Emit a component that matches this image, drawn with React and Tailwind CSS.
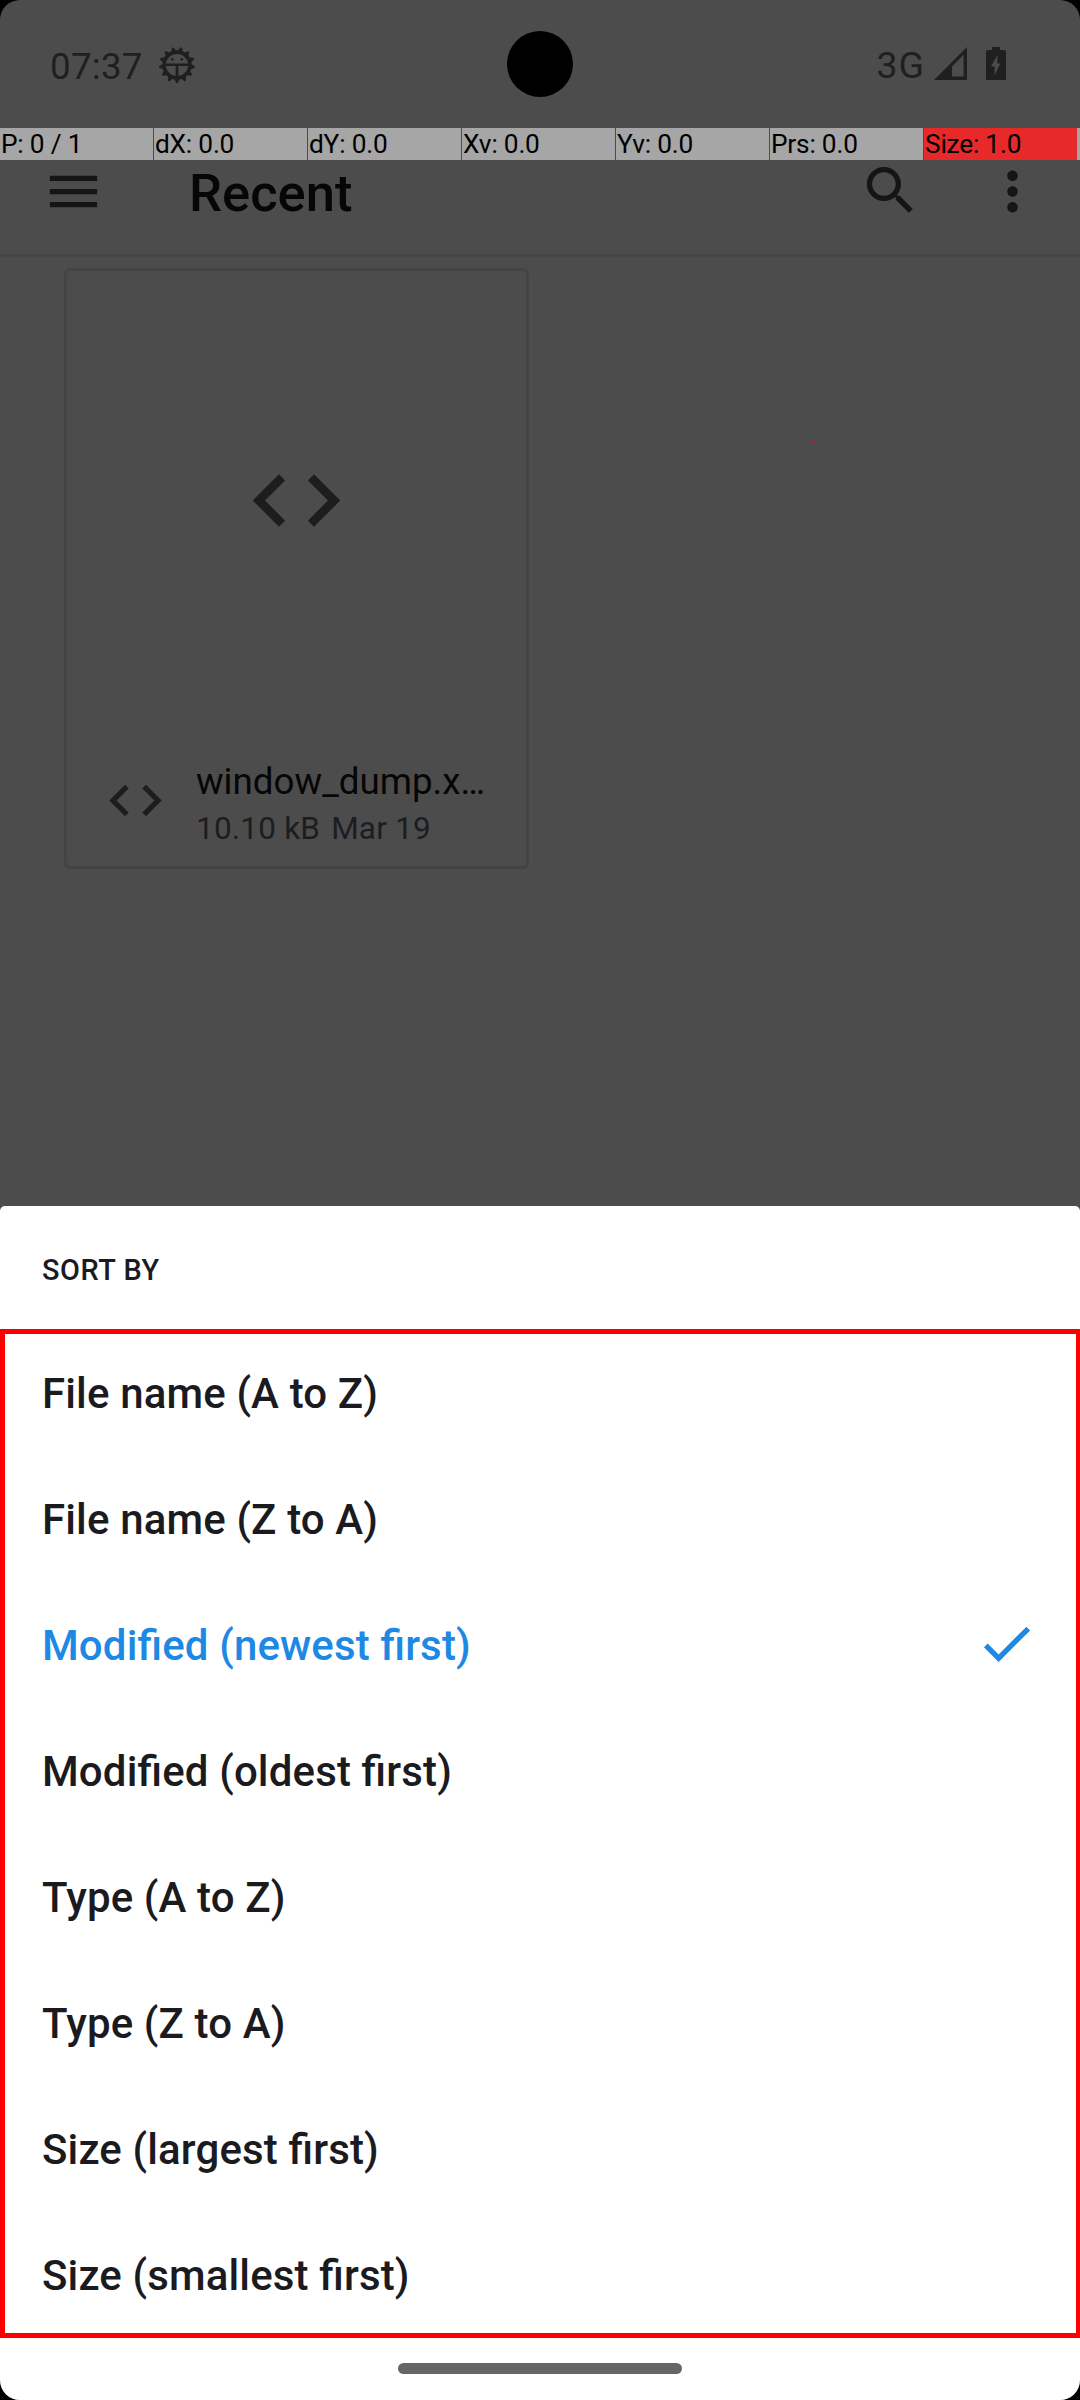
import React from 'react';

const pointerCells = [
  { label: 'P: 0 / 1', tone: 'border-[#4c4c4c] bg-[#a6a6a6]' },
  { label: 'dX: 0.0', tone: 'border-[#4c4c4c] bg-[#a6a6a6]' },
  { label: 'dY: 0.0', tone: 'border-[#4c4c4c] bg-[#a6a6a6]' },
  { label: 'Xv: 0.0', tone: 'border-[#4c4c4c] bg-[#a6a6a6]' },
  { label: 'Yv: 0.0', tone: 'border-[#c41c1d] bg-[#a6a6a6]' },
  { label: 'Prs: 0.0', tone: 'border-[#4c4c4c] bg-[#a6a6a6]' },
  { label: 'Size: 1.0', tone: 'border-[#a6a6a6] bg-[#e8292a]' },
];

const sortOptions = [
  'File name (A to Z)',
  'File name (Z to A)',
  'Modified (newest first)',
  'Modified (oldest first)',
  'Type (A to Z)',
  'Type (Z to A)',
  'Size (largest first)',
  'Size (smallest first)',
];
const selectedOption = 'Modified (newest first)';

const gearTeeth = Array.from({ length: 13 }, (_, i) => 180 + (i * 360) / 13);

const MENU = 'M3 18h18v-2H3v2zm0-5h18v-2H3v2zm0-7v2h18V6H3z';
const SEARCH =
  'M15.5 14h-.79l-.28-.27C15.41 12.59 16 11.11 16 9.5 16 5.91 13.09 3 9.5 3S3 5.91 3 9.5 5.91 16 9.5 16c1.61 0 3.09-.59 4.23-1.57l.27.28v.79l5 4.99L20.49 19l-4.99-5zm-6 0C7.01 14 5 11.99 5 9.5S7.01 5 9.5 5 14 7.01 14 9.5 11.99 14 9.5 14z';
const MORE =
  'M12 8c1.1 0 2-.9 2-2s-.9-2-2-2-2 .9-2 2 .9 2 2 2zm0 2c-1.1 0-2 .9-2 2s.9 2 2 2 2-.9 2-2-.9-2-2-2zm0 6c-1.1 0-2 .9-2 2s.9 2 2 2 2-.9 2-2-.9-2-2-2z';
const CODE =
  'M9.4 16.6L4.8 12l4.6-4.6L8 6l-6 6 6 6 1.4-1.4zm5.2 0l4.6-4.6-4.6-4.6L16 6l6 6-6 6-1.4-1.4z';
const CHECK = 'M9 16.17L4.83 12l-1.42 1.41L9 19 21 7l-1.41-1.41z';

function Icon({ d, className }) {
  return (
    <svg viewBox="0 0 24 24" fill="currentColor" className={className}>
      <path d={d} />
    </svg>
  );
}

function DebugGear() {
  return (
    <svg viewBox="-19 -19 38 38" className="ml-[15px] mt-[2px] size-[38px]">
      <g stroke="#1f1f1f" fill="none">
        <circle r="12.9" strokeWidth="3.6" />
        {gearTeeth.map((a) => (
          <path
            key={a}
            d="M-1.6 -13.5 L0 -17 L1.6 -13.5 Z"
            strokeWidth="2.2"
            strokeLinejoin="round"
            fill="#1f1f1f"
            transform={`rotate(${a})`}
          />
        ))}
        <path d="M-12 -0.2H12" strokeWidth="2.4" />
        <path d="M0 0V13" strokeWidth="2.8" />
      </g>
      <circle cx="-4.8" cy="-5.8" r="1.3" fill="#1f1f1f" />
      <circle cx="4.8" cy="-5.8" r="1.3" fill="#1f1f1f" />
    </svg>
  );
}

function StatusBar() {
  return (
    <div className="flex h-[128px] items-start pl-[50px] pr-[74px] pt-[44px] text-[#1f1f1f]">
      <span className="mt-px text-[36.75px] leading-[44px] tracking-[0.25px]">07:37</span>
      <DebugGear />
      <span className="-mt-px ml-auto text-[37.5px] font-[450] leading-[44px] tracking-[1px]">3G</span>
      <svg viewBox="0 0 33 33" className="ml-[9px] mt-[3px] size-[33px]">
        <path fillRule="evenodd" fill="#1f1f1f" d="M0 33L33 0V33ZM18 19.6V29.6H29.6V7.8Z" />
      </svg>
      <svg viewBox="0 0 20 33" className="ml-[19px] mt-[3px] h-[33px] w-[20px]">
        <path fill="#1f1f1f" d="M6 0H14V3H18.5L20 4.500V33H0V4.500L1.500 3H6Z" />
        <path fill="#4c4c4c" d="M11.500 8L5 19.500H8.800L8.500 28.500L14.300 16.500H11.300Z" />
      </svg>
    </div>
  );
}

function AppBar() {
  return (
    <div className="flex h-[129px] items-start border-b-[3px] border-[#464646] pl-[42px] pr-[36px] text-[#141516]">
      <Icon d={MENU} className="mt-[32px] size-[63px]" />
      <h1 className="ml-[84px] mt-[2px] text-[52.5px] font-medium leading-[126px] text-[#060606]">Recent</h1>
      <Icon d={SEARCH} className="ml-auto mt-[31px] size-[63px]" />
      <Icon d={MORE} className="ml-[59px] mt-[32px] size-[63px]" />
    </div>
  );
}

function FileCard() {
  return (
    <div className="ml-[64px] mt-[11px] flex h-[601px] w-[465px] flex-col rounded-[6px] border-[3px] border-[#444444] text-[#1c1d1f]">
      <div className="flex h-[462px] items-center justify-center">
        <Icon d={CODE} className="-mt-[4px] size-[105px]" />
      </div>
      <div className="flex flex-1 items-start pl-[37px]">
        <Icon d={CODE} className="mt-[36px] size-[63px]" />
        <div className="ml-[29px] mt-[27px] whitespace-nowrap">
          <div className="text-[36.75px] leading-[44px] text-[#060606]">window_dump.x…</div>
          <div className="mt-[3px] flex text-[31.5px] leading-[44px] tracking-[0.2px]">
            <span>10.10 kB</span>
            <span className="ml-[11px]">Mar 19</span>
          </div>
        </div>
      </div>
    </div>
  );
}

function PointerOverlay() {
  return (
    <div className="absolute left-0 top-[128px] flex h-[32px] w-[1080px] text-[26.25px] leading-[32px] tracking-[-0.2px] text-black">
      {pointerCells.map(({ label, tone }) => (
        <div key={label} className={`w-[154px] border-r pl-px ${tone}`}>
          {label}
        </div>
      ))}
      <div className="flex-1 bg-[#a6a6a6]" />
    </div>
  );
}

function SortSheet() {
  return (
    <div className="relative mt-auto h-[1194px] rounded-t-[5px] bg-white text-[#1b1b1f]">
      <div className="h-[125px] pl-[42px] pt-[2px] text-[28.875px] font-medium leading-[124px] tracking-[0.55px]">SORT BY</div>
      <ul className="tracking-[0.14px] [font-feature-settings:'liga'_1]">
        {sortOptions.map((option) => (
          <li
            key={option}
            className={`flex h-[126px] items-center justify-between pl-[42px] pr-[42px] text-[42px] font-medium leading-[126px] ${option === selectedOption ? 'text-[#1e88e5]' : ''}`}
          >
            {option}
            {option === selectedOption && <Icon d={CHECK} className="-mt-[6px] size-[63px]" />}
          </li>
        ))}
      </ul>
      <div className="mx-auto mt-[24px] h-[11px] w-[284px] rounded-full bg-[#666666]" />
      <div className="absolute left-0 top-[123px] h-[1009px] w-[1080px] border-[5px] border-r-[4px] border-[#ff0000]" />
    </div>
  );
}

export default function App() {
  return (
    <div className="h-[2400px] w-[1080px] bg-black font-['Roboto',sans-serif]">
      <div className="relative flex h-full flex-col overflow-hidden rounded-[20px] bg-[#4c4c4c]">
        <StatusBar />
        <AppBar />
        <FileCard />
        <SortSheet />
        <PointerOverlay />
        <div className="absolute left-[507px] top-[31px] size-[66px] rounded-full bg-black" />
        <div className="absolute left-[811px] top-[442px] size-[2px] bg-[#ff0000]" />
      </div>
    </div>
  );
}
